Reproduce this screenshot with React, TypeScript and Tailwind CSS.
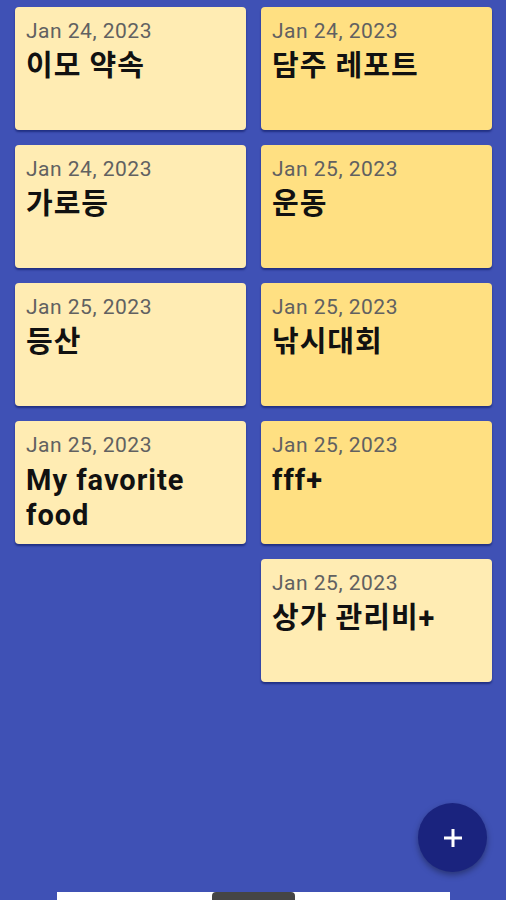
import React from "react";

type Note = { date: string; title: string; dark: boolean };

const notes: Note[] = [
  { date: "Jan 24, 2023", title: "이모 약속", dark: false },
  { date: "Jan 24, 2023", title: "담주 레포트", dark: true },
  { date: "Jan 24, 2023", title: "가로등", dark: false },
  { date: "Jan 25, 2023", title: "운동", dark: true },
  { date: "Jan 25, 2023", title: "등산", dark: false },
  { date: "Jan 25, 2023", title: "낚시대회", dark: true },
  { date: "Jan 25, 2023", title: "My favorite food", dark: false },
  { date: "Jan 25, 2023", title: "fff+", dark: true },
];

function Card({ note }: { note: Note }) {
  return (
    <div
      className={`h-[123px] rounded-[4px] px-[11px] pt-[12px] shadow-[0_2px_2px_rgba(10,20,90,0.55)] ${
        note.dark ? "bg-[#FFE082]" : "bg-[#FFECB3]"
      }`}
    >
      <div className="text-[21px] leading-[24px] tracking-[0.5px] text-[#616161]">{note.date}</div>
      <div className="mt-[6px] pr-[30px] text-[29px] leading-[35px] font-bold tracking-[1px] text-[#111111]">
        {note.title}
      </div>
    </div>
  );
}

export default function App() {
  return (
    <div
      className="relative flex h-[900px] w-[506px] flex-col overflow-hidden bg-[#3F51B5]"
      style={{ fontFamily: "Roboto, 'Noto Sans CJK KR', sans-serif" }}
    >
      <div className="grid grid-cols-2 gap-x-[15px] gap-y-[15px] pl-[15px] pr-[14px] pt-[7px]">
        {notes.map((n, i) => (
          <Card key={i} note={n} />
        ))}
        <div />
        <Card note={{ date: "Jan 25, 2023", title: "상가 관리비+", dark: false }} />
      </div>
      <div className="flex-1" />
      <div className="ml-[57px] flex h-[8px] w-[393px] bg-white">
        <div className="ml-[155px] h-[8px] w-[83px] rounded-t-[4px] bg-[#454545]" />
      </div>
      <button className="absolute left-[418px] top-[803px] flex h-[69px] w-[69px] items-center justify-center rounded-full bg-[#1A237E] shadow-[0_3px_6px_rgba(0,0,0,0.35)]">
        <svg width="20" height="20" viewBox="0 0 20 20">
          <path d="M10 1v18M1 10h18" stroke="white" strokeWidth="3" />
        </svg>
      </button>
    </div>
  );
}
